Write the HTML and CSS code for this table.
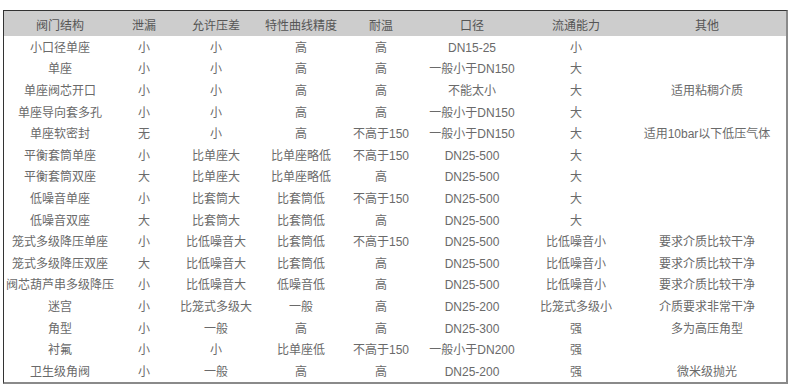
FILE: index.html
```html
<!DOCTYPE html>
<html lang="zh">
<head>
<meta charset="utf-8">
<link rel="stylesheet" href="styles.css">
</head>
<body>
<div class="page">
<table class="valve">
<colgroup>
<col class="c1"><col class="c2"><col class="c3"><col class="c4"><col class="c5"><col class="c6"><col class="c7"><col class="c8">
</colgroup>
<thead>
<tr><th>阀门结构</th><th>泄漏</th><th>允许压差</th><th>特性曲线精度</th><th>耐温</th><th>口径</th><th>流通能力</th><th>其他</th></tr>
</thead>
<tbody>
<tr><td>小口径单座</td><td>小</td><td>小</td><td>高</td><td>高</td><td>DN15-25</td><td>小</td><td></td></tr>
<tr><td>单座</td><td>小</td><td>小</td><td>高</td><td>高</td><td>一般小于DN150</td><td>大</td><td></td></tr>
<tr><td>单座阀芯开口</td><td>小</td><td>小</td><td>高</td><td>高</td><td>不能太小</td><td>大</td><td>适用粘稠介质</td></tr>
<tr><td>单座导向套多孔</td><td>小</td><td>小</td><td>高</td><td>高</td><td>一般小于DN150</td><td>大</td><td></td></tr>
<tr><td>单座软密封</td><td>无</td><td>小</td><td>高</td><td>不高于150</td><td>一般小于DN150</td><td>大</td><td>适用10bar以下低压气体</td></tr>
<tr><td>平衡套筒单座</td><td>小</td><td>比单座大</td><td>比单座略低</td><td>不高于150</td><td>DN25-500</td><td>大</td><td></td></tr>
<tr><td>平衡套筒双座</td><td>大</td><td>比单座大</td><td>比单座略低</td><td>高</td><td>DN25-500</td><td>大</td><td></td></tr>
<tr><td>低噪音单座</td><td>小</td><td>比套筒大</td><td>比套筒低</td><td>不高于150</td><td>DN25-500</td><td>大</td><td></td></tr>
<tr><td>低噪音双座</td><td>大</td><td>比套筒大</td><td>比套筒低</td><td>高</td><td>DN25-500</td><td>大</td><td></td></tr>
<tr><td>笼式多级降压单座</td><td>小</td><td>比低噪音大</td><td>比套筒低</td><td>不高于150</td><td>DN25-500</td><td>比低噪音小</td><td>要求介质比较干净</td></tr>
<tr><td>笼式多级降压双座</td><td>大</td><td>比低噪音大</td><td>比套筒低</td><td>高</td><td>DN25-500</td><td>比低噪音小</td><td>要求介质比较干净</td></tr>
<tr><td>阀芯葫芦串多级降压</td><td>小</td><td>比低噪音大</td><td>低噪音低</td><td>高</td><td>DN25-500</td><td>比低噪音小</td><td>要求介质比较干净</td></tr>
<tr><td>迷宫</td><td>小</td><td>比笼式多级大</td><td>一般</td><td>高</td><td>DN25-200</td><td>比笼式多级小</td><td>介质要求非常干净</td></tr>
<tr><td>角型</td><td>小</td><td>一般</td><td>高</td><td>高</td><td>DN25-300</td><td>强</td><td>多为高压角型</td></tr>
<tr><td>衬氟</td><td>小</td><td>小</td><td>比单座低</td><td>不高于150</td><td>一般小于DN200</td><td>强</td><td></td></tr>
<tr><td>卫生级角阀</td><td>小</td><td>一般</td><td>高</td><td>高</td><td>DN25-200</td><td>强</td><td>微米级抛光</td></tr>
</tbody>
</table>
</div>
</body>
</html>
```

FILE: styles.css
```css
html, body {
  margin: 0;
  padding: 0;
  background: #fff;
}
.page {
  padding: 10px 0 0 3px;
}
.valve {
  border-collapse: separate;
  border-spacing: 0;
  table-layout: fixed;
  width: 785px;
  border-top: 1px solid #333;
  border-left: 1px solid #333;
  border-right: 2px solid #8a8a8a;
  border-bottom: 2px solid #8a8a8a;
  font-family: "Liberation Sans", "Noto Sans CJK SC", sans-serif;
  font-size: 12px;
  color: #6a6a6a;
}
.c1 { width: 112px; }
.c2 { width: 56px; }
.c3 { width: 88px; }
.c4 { width: 82px; }
.c5 { width: 78px; }
.c6 { width: 104px; }
.c7 { width: 104px; }
.c8 { width: 158px; }
.valve th {
  background: #cdcdcd;
  font-weight: normal;
  height: 24px;
  padding: 1px 0 0;
  text-align: center;
  color: #555;
}
.valve td {
  height: 19.6px;
  padding: 2px 0 0;
  text-align: center;
  white-space: nowrap;
  line-height: 14px;
}
```
